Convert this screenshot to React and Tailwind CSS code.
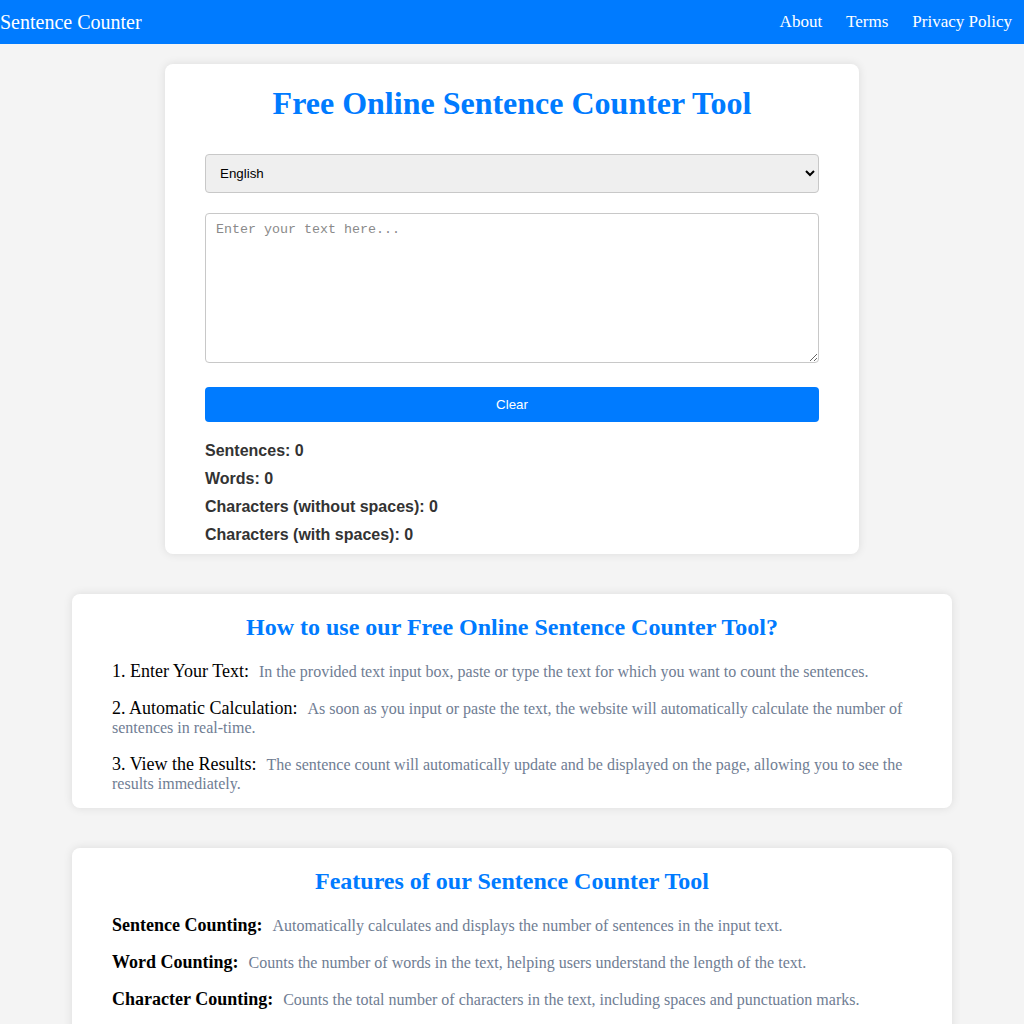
import React, { useState } from 'react';

const steps = [
  {
    label: '1. Enter Your Text:',
    text: 'In the provided text input box, paste or type the text for which you want to count the sentences.',
  },
  {
    label: '2. Automatic Calculation:',
    text: 'As soon as you input or paste the text, the website will automatically calculate the number of sentences in real-time.',
  },
  {
    label: '3. View the Results:',
    text: 'The sentence count will automatically update and be displayed on the page, allowing you to see the results immediately.',
  },
];

const features = [
  {
    label: 'Sentence Counting:',
    text: 'Automatically calculates and displays the number of sentences in the input text.',
  },
  {
    label: 'Word Counting:',
    text: 'Counts the number of words in the text, helping users understand the length of the text.',
  },
  {
    label: 'Character Counting:',
    text: 'Counts the total number of characters in the text, including spaces and punctuation marks.',
  },
  {
    label: 'Multiple Languages:',
    text: 'Supports text written in several languages for accurate counting.',
  },
];

const App = () => {
  const [text, setText] = useState('');
  const [language, setLanguage] = useState('en');

  const sentences = text.trim() ? text.split(/[.!?]+/).filter((s) => s.trim()).length : 0;
  const words = text.trim() ? text.trim().split(/\s+/).length : 0;
  const charsNoSpaces = text.replace(/\s/g, '').length;

  return (
    <div className="min-h-screen bg-[#f4f4f4] font-['Liberation_Serif',serif] pb-10">
      {/* navbar */}
      <nav className="h-[44px] bg-[#007bff] text-white flex items-center justify-between pr-3">
        <a href="#" className="text-[20px] leading-none">Sentence Counter</a>
        <div className="flex items-center gap-6 text-[17px]">
          <a href="#">About</a>
          <a href="#">Terms</a>
          <a href="#">Privacy Policy</a>
        </div>
      </nav>

      {/* counter card */}
      <div className="mx-auto mt-5 w-[694px] bg-white rounded-lg shadow-[0_0_10px_rgba(0,0,0,0.1)] px-10 pt-[21px] pb-[5px]">
        <h1 className="text-center text-[32px] leading-[37px] font-bold text-[#007bff]">
          Free Online Sentence Counter Tool
        </h1>

        <select
          value={language}
          onChange={(e) => setLanguage(e.target.value)}
          className="mt-8 block w-full h-[39px] px-[10px] bg-[#efefef] border border-[#c8c8c8] rounded text-[13.33px] text-black font-['Liberation_Sans',sans-serif]"
        >
          <option value="en">English</option>
          <option value="es">Spanish</option>
          <option value="fr">French</option>
        </select>

        <textarea
          value={text}
          onChange={(e) => setText(e.target.value)}
          placeholder="Enter your text here..."
          className="mt-5 block w-full h-[150px] px-[10px] pt-[8px] pb-[10px] border border-[#c8c8c8] rounded text-[13.33px] leading-[15px] font-['Liberation_Mono',monospace] placeholder:text-[#8a8a8a]"
        />

        <button
          type="button"
          onClick={() => setText('')}
          className="mt-6 block w-full h-[35px] bg-[#007bff] text-white rounded text-[13.33px] font-['Liberation_Sans',sans-serif]"
        >
          Clear
        </button>

        <div className="mt-[15px] font-['Liberation_Sans',sans-serif] font-bold text-[16px] text-[#333]">
          <div className="h-[28px] flex items-center">Sentences: {sentences}</div>
          <div className="h-[28px] flex items-center">Words: {words}</div>
          <div className="h-[28px] flex items-center">Characters (without spaces): {charsNoSpaces}</div>
          <div className="h-[28px] flex items-center">Characters (with spaces): {text.length}</div>
        </div>
      </div>

      {/* how to use */}
      <section className="mx-auto mt-10 w-[880px] bg-white rounded-lg shadow-[0_0_10px_rgba(0,0,0,0.1)] px-10 pt-[19px] pb-[15px]">
        <h2 className="text-center text-[24px] leading-[28px] font-bold text-[#007bff]">
          How to use our Free Online Sentence Counter Tool?
        </h2>
        <div className="mt-[21px] flex flex-col gap-[18px]">
          {steps.map((s) => (
            <p key={s.label} className="leading-[19px]">
              <span className="text-[18px] text-black">{s.label}</span>
              <span className="ml-[10px] text-[16px] text-[#6f7d93]">{s.text}</span>
            </p>
          ))}
        </div>
      </section>

      {/* features */}
      <section className="mx-auto mt-10 w-[880px] bg-white rounded-lg shadow-[0_0_10px_rgba(0,0,0,0.1)] px-10 pt-[19px] pb-[15px]">
        <h2 className="text-center text-[24px] leading-[28px] font-bold text-[#007bff]">
          Features of our Sentence Counter Tool
        </h2>
        <div className="mt-[21px] flex flex-col gap-[18px]">
          {features.map((f) => (
            <p key={f.label} className="leading-[19px]">
              <span className="text-[18px] font-bold text-black">{f.label}</span>
              <span className="ml-[10px] text-[16px] text-[#6f7d93]">{f.text}</span>
            </p>
          ))}
        </div>
      </section>
    </div>
  );
};

export default App;
